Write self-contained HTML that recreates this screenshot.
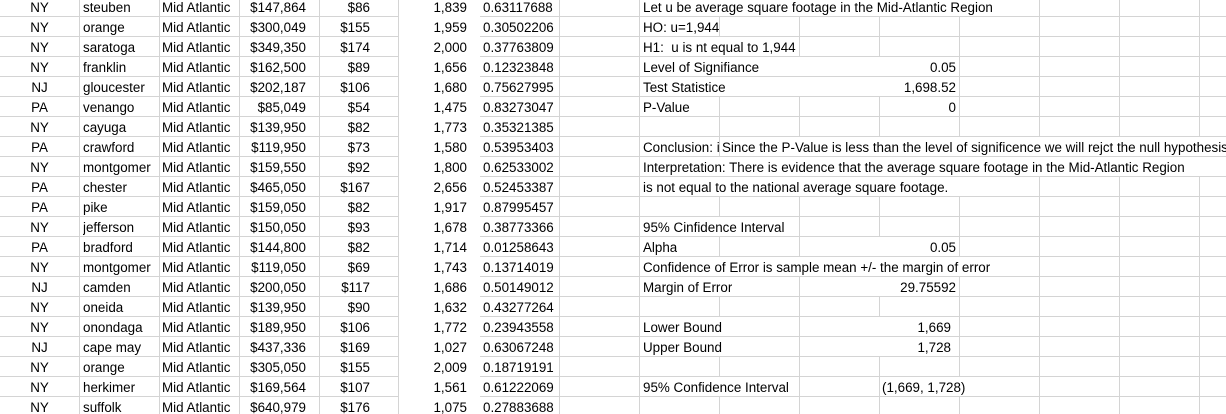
<!DOCTYPE html>
<html><head><meta charset="utf-8"><style>
html,body{margin:0;padding:0;background:#fff;width:1226px;height:414px;overflow:hidden;position:relative}
body{font-family:"Liberation Sans",Arial,sans-serif;font-size:13.4px;color:#000}
.v{position:absolute;top:0;width:1px;height:414px;background:#d4d4d4}
.hl{position:absolute;height:1px;background:#d4d4d4}
.r{position:absolute;left:0;width:1226px;height:19px}
.r span{position:absolute;top:1px;line-height:19px;white-space:nowrap;overflow:hidden}
.c{width:1px;height:19px!important;background:#fff}
.a{left:0;width:79px;text-align:center}
.b{left:83px;width:75px}
.cc{left:162px;width:77px}
.d{left:239px;width:67px;text-align:right}
.e{left:319px;width:51px;text-align:right}
.f{left:398px;width:69px;text-align:right}
.g{left:483px}
.j{left:643px}
.val{left:800px;width:156px;text-align:right}
.val2{left:800px;width:151px;text-align:right}
</style></head><body>
<div id="grid"></div>
<script>
var g='';
[79,159,239,319,398,559,639,719,799,879,959,1039,1119,1199].forEach(function(x){g+='<div class="v" style="left:'+x+'px"></div>';});
for(var k=0;k<21;k++){var y=16+20*k;g+='<div class="hl" style="top:'+y+'px;left:0;width:399px"></div><div class="hl" style="top:'+y+'px;left:480px;width:746px"></div>';}
var hide={0:[719,799,879,959],2:[719],3:[719,799,879],4:[719,799,879],7:[799,879,959,1039,1119,1199],8:[719,799,879,959,1039,1119,1199],9:[719,799,879,959],11:[719],12:[879],13:[719,799,879,959],14:[719,879],16:[719,879],17:[719,879],19:[719,959]};
for(var k in hide){hide[k].forEach(function(x){g+='<div class="hl c" style="left:'+x+'px;top:'+(20*k-3)+'px"></div>';});}
var rows=[["NY","steuben","$147,864","$86","1,839","0.63117688"],["NY","orange","$300,049","$155","1,959","0.30502206"],["NY","saratoga","$349,350","$174","2,000","0.37763809"],["NY","franklin","$162,500","$89","1,656","0.12323848"],["NJ","gloucester","$202,187","$106","1,680","0.75627995"],["PA","venango","$85,049","$54","1,475","0.83273047"],["NY","cayuga","$139,950","$82","1,773","0.35321385"],["PA","crawford","$119,950","$73","1,580","0.53953403"],["NY","montgomer","$159,550","$92","1,800","0.62533002"],["PA","chester","$465,050","$167","2,656","0.52453387"],["PA","pike","$159,050","$82","1,917","0.87995457"],["NY","jefferson","$150,050","$93","1,678","0.38773366"],["PA","bradford","$144,800","$82","1,714","0.01258643"],["NY","montgomer","$119,050","$69","1,743","0.13714019"],["NJ","camden","$200,050","$117","1,686","0.50149012"],["NY","oneida","$139,950","$90","1,632","0.43277264"],["NY","onondaga","$189,950","$106","1,772","0.23943558"],["NJ","cape may","$437,336","$169","1,027","0.63067248"],["NY","orange","$305,050","$155","2,009","0.18719191"],["NY","herkimer","$169,564","$107","1,561","0.61222069"],["NY","suffolk","$640,979","$176","1,075","0.27883688"]];
var right={0:'<span class="j">Let u be average square footage in the Mid-Atlantic Region</span>',1:'<span class="j">HO: u=1,944</span>',2:'<span class="j">H1: &nbsp;u is nt equal to 1,944</span>',3:'<span class="j">Level of Signifiance</span><span class="val">0.05</span>',4:'<span class="j">Test Statistice</span><span class="val">1,698.52</span>',5:'<span class="j">P-Value</span><span class="val">0</span>',7:'<span class="j" style="width:76px">Conclusion: is</span><span style="left:722px">Since the P-Value is less than the level of significence we will rejct the null hypothesis</span>',8:'<span class="j">Interpretation: There is evidence that the average square footage in the Mid-Atlantic Region</span>',9:'<span class="j">is not equal to the national average square footage.</span>',11:'<span class="j">95% Cinfidence Interval</span>',12:'<span class="j">Alpha</span><span class="val">0.05</span>',13:'<span class="j">Confidence of Error is sample mean +/- the margin of error</span>',14:'<span class="j">Margin of Error</span><span class="val">29.75592</span>',16:'<span class="j">Lower Bound</span><span class="val2">1,669</span>',17:'<span class="j">Upper Bound</span><span class="val2">1,728</span>',19:'<span class="j">95% Confidence Interval</span><span style="left:882px">(1,669, 1,728)</span>'};
rows.forEach(function(r,k){g+='<div class="r" style="top:'+(20*k-3)+'px"><span class="a">'+r[0]+'</span><span class="b">'+r[1]+'</span><span class="cc">Mid Atlantic</span><span class="d">'+r[2]+'</span><span class="e">'+r[3]+'</span><span class="f">'+r[4]+'</span><span class="g">'+r[5]+'</span>'+(right[k]||'')+'</div>';});
document.getElementById('grid').innerHTML=g;
</script>
</body></html>
